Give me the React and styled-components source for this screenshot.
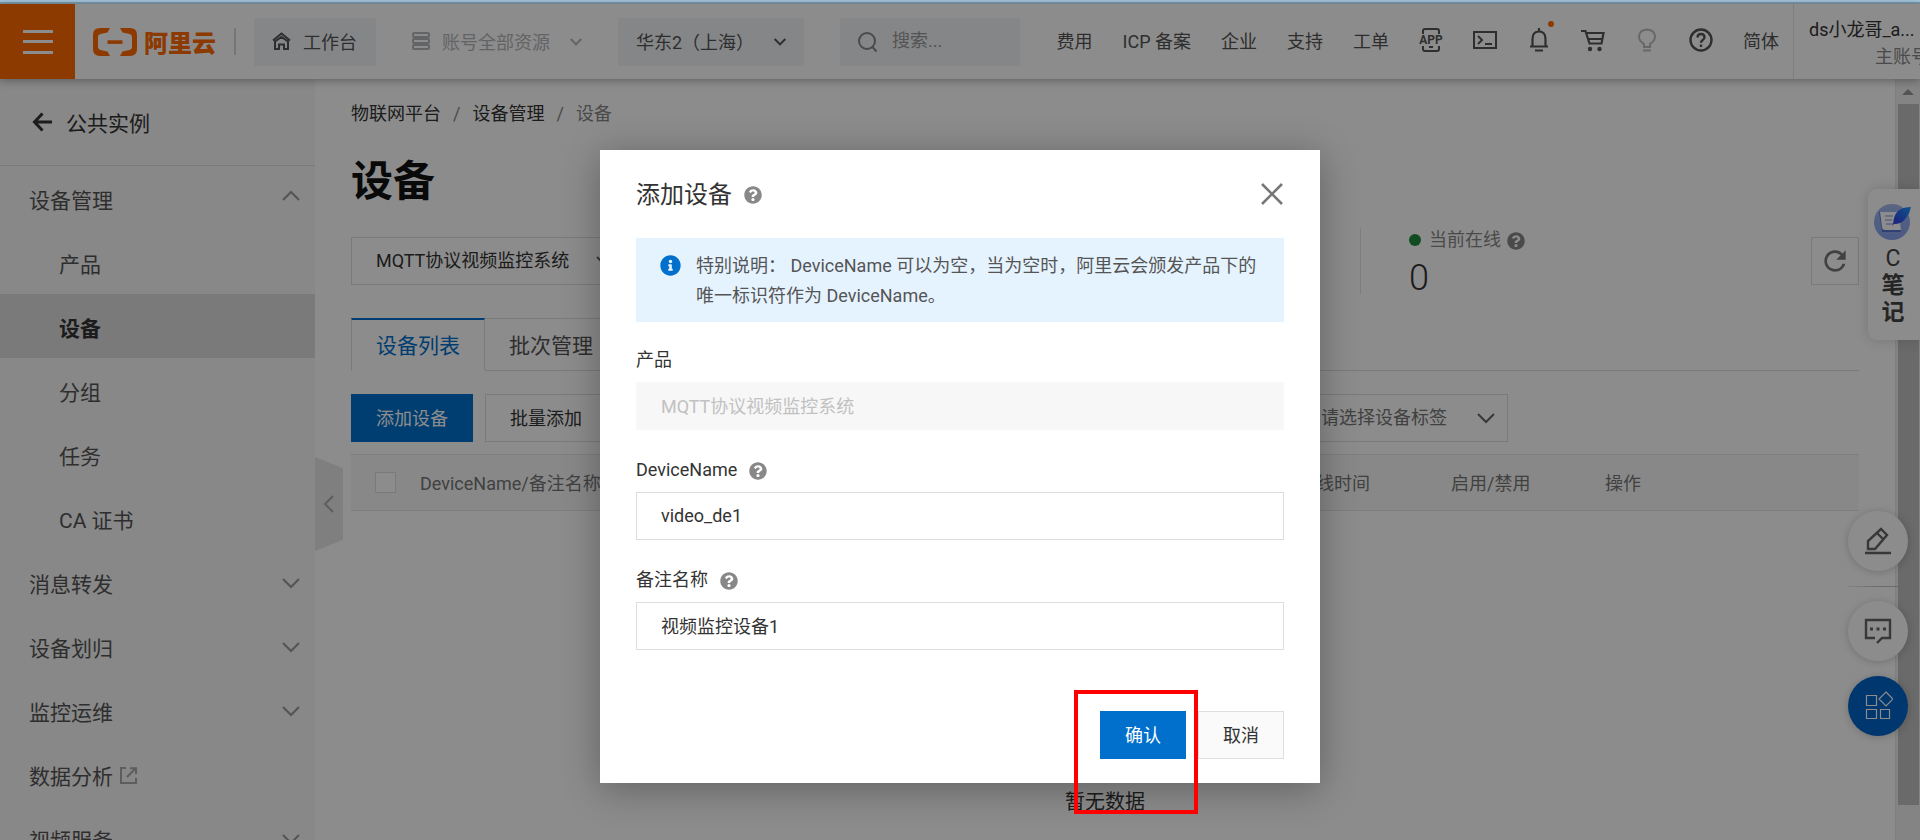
import React, { useState } from "react";
import styled, { createGlobalStyle, css } from "styled-components";
import { FaInfoCircle, FaQuestionCircle } from "react-icons/fa";
import { MdRefresh } from "react-icons/md";

const GlobalStyle = createGlobalStyle`
  * {
    box-sizing: border-box;
  }
  body {
    margin: 0;
    font-family: Roboto, "Noto Sans CJK SC", sans-serif;
    font-size: 18px;
    color: #333;
    overflow: hidden;
  }
  button, input, select {
    font: inherit;
    color: inherit;
  }
  a {
    color: inherit;
    text-decoration: none;
  }
  svg {
    flex: none;
    display: block;
  }
`;

const Page = styled.div`
  position: relative;
  display: flex;
  flex-direction: column;
  height: 100vh;
  overflow: hidden;
  background: #fff;
`;

const TopStrip = styled.div`
  flex: none;
  height: 4px;
  background: #9fc0d6;
  border-bottom: 2px solid #7893a3;
`;

/* ---------- header ---------- */

const Header = styled.header`
  position: relative;
  z-index: 1;
  flex: none;
  display: flex;
  align-items: center;
  height: 75px;
  background: #fff;
  box-shadow: 0 2px 8px rgba(0, 0, 0, 0.3);
  white-space: nowrap;
`;

const MenuButton = styled.button`
  flex: none;
  display: flex;
  align-items: center;
  justify-content: center;
  width: 75px;
  height: 75px;
  padding: 0;
  border: 0;
  background: #ff6a00;
  color: #fff;
`;

const Logo = styled.a`
  display: flex;
  align-items: center;
  gap: 6px;
  height: 27px;
  margin-left: 17px;
  padding-right: 18px;
  border-right: 2px solid #d8d8d8;
  color: #ff6a00;
  font-size: 24px;
  font-weight: 900;
`;

const HeaderButton = styled.button`
  display: flex;
  align-items: center;
  justify-content: space-between;
  height: 48px;
  width: ${({ $width }) => $width}px;
  margin-left: 18px;
  padding: 0 18px 2px;
  border: 0;
  border-radius: 2px;
  background: ${({ $plain }) => ($plain ? "transparent" : "#f2f4f8")};
  color: ${({ $plain }) => ($plain ? "#b3b6ba" : "#555")};
`;

const IconLabel = styled.span`
  display: flex;
  align-items: center;
  gap: 12px;
`;

const Search = styled.label`
  display: flex;
  align-items: center;
  gap: 14px;
  width: 180px;
  height: 48px;
  margin-left: 36px;
  padding: 0 18px;
  background: #f2f4f8;
  color: #888;
`;

const SearchInput = styled.input`
  width: 100%;
  min-width: 0;
  padding: 0 0 2px;
  border: 0;
  outline: none;
  background: none;
  &::placeholder {
    color: #999;
    opacity: 1;
  }
`;

const HeaderNav = styled.nav`
  display: flex;
  align-items: center;
  gap: 30px;
  margin-left: auto;
  padding: 0 14px 3px 0;
  color: #555;
`;

const IconButton = styled.button`
  position: relative;
  display: flex;
  padding: 0;
  border: 0;
  background: none;
  color: ${({ $muted }) => ($muted ? "#b9bdc4" : "#555")};
`;

const Dot = styled.span`
  position: absolute;
  top: -7px;
  right: -3px;
  width: 6px;
  height: 6px;
  border-radius: 50%;
  background: #ff6a00;
`;

const User = styled.div`
  flex: none;
  align-self: stretch;
  width: 127px;
  padding: 12px 0 0 15px;
  border-left: 1px solid #e5e5e5;
  overflow: hidden;
`;

const UserLines = styled.div`
  width: 120px;
  line-height: 27px;
  color: #333;
`;

const UserRole = styled.div`
  text-align: right;
  color: #888;
`;

/* ---------- sidebar ---------- */

const Body = styled.div`
  flex: 1;
  min-height: 0;
  display: flex;
`;

const Sidebar = styled.aside`
  flex: none;
  width: 315px;
  background: #f7f7f7;
  color: #555;
  font-size: 21px;
`;

const BackLink = styled.a`
  display: flex;
  align-items: center;
  gap: 14px;
  height: 87px;
  padding-left: 32px;
  border-bottom: 1px solid #dedede;
  color: #333;
`;

const SideItem = styled.a`
  display: flex;
  align-items: center;
  justify-content: space-between;
  height: 64px;
  padding: 0 15px 0 ${({ $child }) => ($child ? 59 : 29)}px;
  ${({ $active }) =>
    $active &&
    css`
      background: #dfdfdf;
      color: #333;
      font-weight: 700;
    `}
  > svg {
    color: #999;
  }
`;

const SideText = styled.span`
  display: flex;
  align-items: center;
  gap: 7px;
  padding-top: 2px;
`;

const Collapse = styled.button`
  position: absolute;
  left: 315px;
  top: 457px;
  display: flex;
  align-items: center;
  justify-content: center;
  width: 28px;
  height: 94px;
  padding: 0;
  border: 0;
  background: #e8e8e8;
  color: #aaa;
  clip-path: polygon(0 0, 100% 12%, 100% 88%, 0 100%);
`;

/* ---------- main ---------- */

const Main = styled.main`
  flex: 1;
  min-width: 0;
  padding: 23px 36px 0;
  overflow: hidden;
`;

const Breadcrumb = styled.nav`
  display: flex;
  gap: 12px;
  line-height: 24px;
  color: #333;
`;

const Muted = styled.span`
  color: #888;
`;

const Title = styled.h1`
  margin: 26px 0 17px;
  font-size: 42px;
  line-height: 60px;
  font-weight: 700;
  color: #111;
`;

const Overview = styled.div`
  display: flex;
  align-items: center;
  height: 64px;
`;

const SelectBox = styled.div`
  position: relative;
  flex: none;
  width: ${({ $width }) => $width}px;
  svg {
    position: absolute;
    right: 13px;
    top: 14px;
    pointer-events: none;
    color: #666;
  }
`;

const Select = styled.select`
  appearance: none;
  display: block;
  width: 100%;
  height: 48px;
  padding: 0 24px 2px;
  border: 1px solid #dedede;
  border-radius: 0;
  background: #fff;
  color: ${({ $muted }) => ($muted ? "#777" : "#333")};
`;

const Stat = styled.div`
  width: 451px;
  height: 66px;
  margin-left: auto;
  padding-left: 48px;
  border-left: 1px solid #e5e5e5;
`;

const StatName = styled.div`
  display: flex;
  align-items: center;
  gap: 6px;
  line-height: 24px;
  color: #888;
`;

const Status = styled.i`
  width: 12px;
  height: 12px;
  margin-right: 2px;
  border-radius: 50%;
  background: #1e8e3e;
`;

const StatValue = styled.div`
  font-size: 36px;
  font-weight: 300;
  line-height: 52px;
`;

const Refresh = styled.button`
  display: flex;
  align-items: center;
  justify-content: center;
  width: 48px;
  height: 48px;
  padding: 0;
  border: 1px solid #dedede;
  background: #fff;
  color: #777;
  font-size: 32px;
`;

const Tabs = styled.div`
  display: flex;
  margin-top: 25px;
  font-size: 21px;
`;

const Tab = styled.button`
  height: 53px;
  padding: 0 24px 2px;
  border: 1px solid #dedede;
  border-left-width: ${({ $active }) => ($active ? 1 : 0)}px;
  background: #fff;
  color: #555;
  ${({ $active }) =>
    $active &&
    css`
      border-top: 2px solid #0070cc;
      border-bottom-color: transparent;
      color: #0070cc;
    `}
`;

const TabRest = styled.div`
  flex: 1;
  border-bottom: 1px solid #dedede;
`;

const Toolbar = styled.div`
  display: flex;
  gap: 12px;
  margin: 23px 0 12px;
`;

const Button = styled.button`
  height: 48px;
  padding: 0 24px 2px;
  border: 1px solid #dedede;
  border-radius: 0;
  background: ${({ $soft }) => ($soft ? "#fafafa" : "#fff")};
  white-space: nowrap;
  ${({ $primary }) =>
    $primary &&
    css`
      border-color: #0070cc;
      background: #0070cc;
      color: #fff;
    `}
`;

const Query = styled.div`
  flex: none;
  width: 665px;
`;

const TextInput = styled.input`
  display: block;
  width: 100%;
  height: 48px;
  padding: 0 24px 2px;
  border: 1px solid #dedede;
  border-radius: 0;
  background: #fff;
  outline: none;
  &:disabled {
    border-color: #f7f7f7;
    background: #f7f7f7;
    color: #c1c1c1;
  }
`;

const Table = styled.table`
  width: 100%;
  table-layout: fixed;
  border-collapse: collapse;
`;

const Th = styled.th`
  height: 56px;
  width: ${({ $width }) => ($width ? `${$width}px` : "auto")};
  padding: 0 0 2px;
  border: 1px solid #e6e6e6;
  border-width: 1px 0;
  background: #f7f7f7;
  color: #777;
  font-weight: 400;
  text-align: left;
`;

const Checkbox = styled.input`
  appearance: none;
  display: block;
  width: 21px;
  height: 21px;
  margin: 2px 0 0 24px;
  border: 1px solid #dedede;
  background: #fff;
`;

const Empty = styled.td`
  height: 580px;
  padding: 0;
  text-align: center;
  font-size: 20px;
`;

const Scrollbar = styled.div`
  flex: none;
  width: 25px;
  padding: 10px 2px 35px;
  border-left: 1px solid #e8e8e8;
  display: flex;
  flex-direction: column;
  align-items: center;
  gap: 9px;
  background: #f1f1f1;
`;

const Thumb = styled.div`
  flex: 1;
  width: 21px;
  background: #c1c1c1;
`;

/* ---------- floating tools ---------- */

const Note = styled.div`
  position: absolute;
  right: 0;
  top: 189px;
  width: 52px;
  height: 151px;
  padding: 13px 2px 0 0;
  border-radius: 9px 0 0 9px;
  background: #fff;
  box-shadow: 0 0 14px rgba(0, 0, 0, 0.16);
  display: flex;
  flex-direction: column;
  align-items: center;
  font-size: 23px;
  line-height: 27px;
  font-weight: 700;
  color: #444;
`;

const Letter = styled.span`
  padding-top: 5px;
  font-weight: 400;
`;

const Tools = styled.div`
  position: absolute;
  right: 12px;
  top: 511px;
  display: flex;
  flex-direction: column;
  gap: 15px;
`;

const Tool = styled.button`
  display: flex;
  align-items: center;
  justify-content: center;
  width: 60px;
  height: 60px;
  padding: 0;
  border: 0;
  border-radius: 50%;
  background: ${({ $primary }) => ($primary ? "#0064c8" : "#fff")};
  color: ${({ $primary }) => ($primary ? "#fff" : "#666")};
  box-shadow: 0 1px 8px rgba(0, 0, 0, 0.2);
`;

const ToolLine = styled.div`
  height: 1px;
  margin-bottom: -1px;
  background: linear-gradient(90deg, #eee, #c4c4c4, #c1c1c1);
`;

/* ---------- dialog ---------- */

const Overlay = styled.div`
  position: absolute;
  inset: 4px 0 0;
  z-index: 2;
  display: flex;
  justify-content: center;
  align-items: flex-start;
  padding-top: 146px;
  background: rgba(0, 0, 0, 0.45);
`;

const Dialog = styled.section`
  width: 720px;
  padding: 0 36px 24px;
  background: #fff;
  box-shadow: 0 6px 36px rgba(0, 0, 0, 0.3);
`;

const DialogHead = styled.div`
  display: flex;
  align-items: center;
  gap: 12px;
  height: 88px;
`;

const DialogTitle = styled.h2`
  margin: 0;
  padding-bottom: 4px;
  font-size: 24px;
  font-weight: 400;
`;

const Close = styled.button`
  display: flex;
  margin-left: auto;
  padding: 0;
  border: 0;
  background: none;
  color: #777;
`;

const Help = styled(FaQuestionCircle)`
  margin-top: 2px;
  font-size: 18px;
  color: #888;
`;

const Notice = styled.div`
  display: flex;
  gap: 15px;
  padding: 13px 24px 11px;
  background: #e5f3ff;
  color: #555;
  line-height: 30px;
  svg {
    margin-top: 4px;
    font-size: 21px;
    color: #0070cc;
  }
`;

const Field = styled.div`
  margin-top: 22px;
  ${Notice} + & {
    margin-top: 20px;
  }
`;

const FieldLabel = styled.label`
  display: flex;
  align-items: center;
  gap: 12px;
  margin-bottom: 4px;
  line-height: 36px;
`;

const DialogFoot = styled.div`
  display: flex;
  justify-content: flex-end;
  gap: 12px;
  margin-top: 61px;
`;

const Highlight = styled.div`
  position: relative;
  &::after {
    content: "";
    position: absolute;
    inset: -21px -12px -55px -26px;
    border: 4px solid #f00;
    pointer-events: none;
  }
`;

const Chevron = ({ dir = "down", size = 18, width = 2 }) => {
  const d = {
    down: "M1 6l8 8 8-8",
    up: "M1 11l8-8 8 8",
    left: "M13 1l-8 8 8 8",
  }[dir];
  return (
    <svg width={size} height={size} viewBox="0 0 18 18" fill="none" stroke="currentColor" strokeWidth={width}>
      <path d={d} />
    </svg>
  );
};

const Icon = ({ size = 24, children, ...rest }) => (
  <svg width={size} height={size} viewBox="0 0 24 24" fill="none" stroke="currentColor" strokeWidth="2" {...rest}>
    {children}
  </svg>
);

const sideItems = [
  { name: "设备管理", arrow: "up" },
  { name: "产品", child: true },
  { name: "设备", child: true, active: true },
  { name: "分组", child: true },
  { name: "任务", child: true },
  { name: "CA 证书", child: true },
  { name: "消息转发", arrow: "down" },
  { name: "设备划归", arrow: "down" },
  { name: "监控运维", arrow: "down" },
  { name: "数据分析", external: true },
  { name: "视频服务", arrow: "down" },
];

const navLinks = ["费用", "ICP 备案", "企业", "支持", "工单"];

const columns = [
  { name: "DeviceName/备注名称", width: 842 },
  { name: "最后上线时间", width: 189 },
  { name: "启用/禁用", width: 154 },
  { name: "操作" },
];

const HeaderBar = () => (
  <Header>
    <MenuButton aria-label="菜单">
      <svg width="30" height="24" fill="none" stroke="currentColor" strokeWidth="3">
        <path d="M0 1.500h30M0 11.500h30M0 22.500h30" />
      </svg>
    </MenuButton>
    <Logo href="#">
      <svg width="46" height="28" viewBox="0 0 46 28" fill="currentColor">
        <path d="M18 0H8Q1 0 1 7v14q0 7 7 7h10l-2.500-4.500L8.500 22Q6 21.500 6 19V9q0-2.500 2.500-3L15.500 4.500z" />
        <path d="M28 0h10q7 0 7 7v14q0 7-7 7H28l2.500-4.500 7-1.500q2.500-.5 2.500-3V9q0-2.500-2.500-3l-7-1.500z" />
        <path d="M15.500 12.300h15v3.600h-15z" />
      </svg>
      阿里云
    </Logo>
    <HeaderButton $width={122}>
      <IconLabel>
        <svg width="19" height="18" viewBox="0 0 19 18" fill="none" stroke="currentColor" strokeWidth="2">
          <path d="M1 8.500l8.500-7 8.500 7M3 9.500V17h4v-4.500h5V17h4V9.500L9.500 5z" />
        </svg>
        工作台
      </IconLabel>
    </HeaderButton>
    <HeaderButton $plain $width={206}>
      <IconLabel>
        <svg width="18" height="18" viewBox="0 0 18 18" fill="none" stroke="currentColor" strokeWidth="2">
          <rect x="1" y="1" width="16" height="4" rx="1" />
          <rect x="1" y="7" width="16" height="4" rx="1" />
          <rect x="1" y="13" width="16" height="4" rx="1" />
        </svg>
        账号全部资源
      </IconLabel>
      <Chevron size={12} width={3} />
    </HeaderButton>
    <HeaderButton $width={186}>
      华东2（上海）
      <Chevron size={12} width={3} />
    </HeaderButton>
    <Search>
      <svg width="20" height="20" viewBox="0 0 20 20" fill="none" stroke="currentColor" strokeWidth="2">
        <circle cx="9" cy="9" r="8" />
        <path d="M14.500 15l4 4.500" />
      </svg>
      <SearchInput aria-label="搜索" placeholder="搜索..." />
    </Search>
    <HeaderNav>
      {navLinks.map((name) => (
        <a key={name} href="#">
          {name}
        </a>
      ))}
      <IconButton aria-label="APP">
        <Icon>
          <path d="M4 6V3q0-2 2-2h12q2 0 2 2v3M4 18v3q0 2 2 2h12q2 0 2-2v-3M10 19h4" />
          <text
            x="12"
            y="16"
            textAnchor="middle"
            fontSize="12"
            fontWeight="700"
            fill="currentColor"
            stroke="none"
          >
            APP
          </text>
        </Icon>
      </IconButton>
      <IconButton aria-label="云命令行">
        <Icon>
          <path d="M1 4h22v16H1zM5 8l4 4-4 4M12 16h7" />
        </Icon>
      </IconButton>
      <IconButton aria-label="消息">
        <Icon strokeWidth="2.200">
          <path d="M12 0v3M3 18.500h18M5.500 18v-7q0-7.500 6.500-7.500t6.500 7.500v7M8 22.500h8" />
        </Icon>
        <Dot />
      </IconButton>
      <IconButton aria-label="购物车">
        <Icon strokeWidth="2.200">
          <path d="M0 3h4.500l4 12.500h12L22.500 5H5M7 11h14" />
          <circle cx="9" cy="21" r="2.200" fill="currentColor" stroke="none" />
          <circle cx="18.500" cy="21" r="2.200" fill="currentColor" stroke="none" />
        </Icon>
      </IconButton>
      <IconButton $muted aria-label="提示">
        <Icon>
          <path d="M9 19v-3q-5-3-5-7.500Q4.500 2 12 1.500 19.500 2 20 8.500q0 4.500-5 7.500v3zM8 22.500h8" />
        </Icon>
      </IconButton>
      <IconButton aria-label="帮助">
        <Icon strokeWidth="2.400">
          <circle cx="12" cy="12" r="10.500" />
          <path d="M8.500 9.500q0-3.500 3.500-3.500t3.500 3.300q0 1.700-2 2.900-1.500 1-1.500 2.600M12 16.500v2.500" />
        </Icon>
      </IconButton>
      <a href="#">简体</a>
    </HeaderNav>
    <User>
      <UserLines>
        ds小龙哥_a...
        <UserRole>主账号</UserRole>
      </UserLines>
    </User>
  </Header>
);

const SideNav = () => (
  <Sidebar>
    <BackLink href="#">
      <svg width="20" height="20" viewBox="0 0 20 20" fill="none" stroke="currentColor" strokeWidth="3">
        <path d="M10.500 1.500L2.500 10l8 8.500M2.500 10H20" />
      </svg>
      公共实例
    </BackLink>
    {sideItems.map((item) => (
      <SideItem key={item.name} href="#" $child={item.child} $active={item.active}>
        <SideText>
          {item.name}
          {item.external && (
            <svg width="17" height="17" viewBox="0 0 17 17" fill="none" stroke="#aaa" strokeWidth="2">
              <path d="M6 1H1v15h15v-5M7 10l8-8M10 1.200h6V7" />
            </svg>
          )}
        </SideText>
        {item.arrow && <Chevron dir={item.arrow} />}
      </SideItem>
    ))}
  </Sidebar>
);

const DeviceList = () => (
  <Main>
    <Breadcrumb>
      <a href="#">物联网平台</a>
      <Muted>/</Muted>
      <a href="#">设备管理</a>
      <Muted>/</Muted>
      <Muted>设备</Muted>
    </Breadcrumb>
    <Title>设备</Title>
    <Overview>
      <SelectBox $width={276}>
        <Select aria-label="产品">
          <option>MQTT协议视频监控系统</option>
        </Select>
        <Chevron />
      </SelectBox>
      <Stat>
        <StatName>
          <Status />
          当前在线
          <Help />
        </StatName>
        <StatValue>0</StatValue>
      </Stat>
      <Refresh aria-label="刷新">
        <MdRefresh />
      </Refresh>
    </Overview>
    <Tabs>
      <Tab $active>设备列表</Tab>
      <Tab>批次管理</Tab>
      <TabRest />
    </Tabs>
    <Toolbar>
      <Button $primary>添加设备</Button>
      <Button>批量添加</Button>
      <Query>
        <TextInput aria-label="DeviceName" />
      </Query>
      <SelectBox $width={212}>
        <Select $muted aria-label="设备标签">
          <option>请选择设备标签</option>
        </Select>
        <Chevron />
      </SelectBox>
    </Toolbar>
    <Table>
      <thead>
        <tr>
          <Th $width={69}>
            <Checkbox type="checkbox" aria-label="全选" />
          </Th>
          {columns.map((col) => (
            <Th key={col.name} $width={col.width}>
              {col.name}
            </Th>
          ))}
        </tr>
      </thead>
      <tbody>
        <tr>
          <Empty colSpan={columns.length + 1}>暂无数据</Empty>
        </tr>
      </tbody>
    </Table>
  </Main>
);

const FloatingTools = () => (
  <>
    <Note>
      <svg width="40" height="38" viewBox="0 0 40 38">
        <defs>
          <linearGradient id="feather" x1="1" y1="0" x2="0" y2="1">
            <stop offset="0" stopColor="#1b9bff" />
            <stop offset="1" stopColor="#3a2fe0" />
          </linearGradient>
          <linearGradient id="disc" x1="0" y1="0" x2="0" y2="1">
            <stop offset="0" stopColor="#a5b9ee" />
            <stop offset="1" stopColor="#86a2ee" />
          </linearGradient>
        </defs>
        <circle cx="19" cy="20" r="18" fill="url(#disc)" />
        <path d="M6 10l3 20h19l-2-20z" fill="#5876d8" />
        <path d="M7 10h19l2 18H12q-3 0-3-3z" fill="#fff" />
        <path d="M12 14h8M12 18h7M13 22h7" stroke="#a9bbf0" strokeWidth="1.500" />
        <path d="M38 5q-14 0-17 11-.5 3-1 6l-1 2 2-2q8 0 12-6 4-5 5-11z" fill="url(#feather)" />
      </svg>
      <Letter>C</Letter>
      <span>笔</span>
      <span>记</span>
    </Note>
    <Tools>
      <Tool aria-label="编辑">
        <svg width="28" height="28" viewBox="0 0 28 28" fill="none" stroke="currentColor" strokeWidth="2.400">
          <path d="M4 22v-8L17 2l6 6L11 22zM13 6l6 6M1 26h26" />
        </svg>
      </Tool>
      <ToolLine />
      <Tool aria-label="反馈">
        <svg width="28" height="28" viewBox="0 0 28 28" fill="none" stroke="currentColor" strokeWidth="2.400">
          <path d="M11 21H2V3h24v18h-8l-5 5" />
          <path d="M6 12h3M12.500 12h3M19 12h3" strokeWidth="3" />
        </svg>
      </Tool>
      <Tool $primary aria-label="应用">
        <svg width="30" height="30" viewBox="0 0 30 30" fill="none" stroke="currentColor" strokeWidth="1.200">
          <path d="M3.500 4.500h10v10h-10zM3.500 18.500h10v9h-10zM17.500 18.500h9v9h-9zM23 1l7 7-7 7-7-7z" />
        </svg>
      </Tool>
    </Tools>
  </>
);

const AddDeviceDialog = () => {
  const [deviceName, setDeviceName] = useState("video_de1");
  const [nickname, setNickname] = useState("视频监控设备1");

  return (
    <Overlay>
      <Dialog role="dialog" aria-labelledby="dialog-title">
        <DialogHead>
          <DialogTitle id="dialog-title">添加设备</DialogTitle>
          <Help />
          <Close aria-label="关闭">
            <Icon strokeWidth="2.600">
              <path d="M2 2l20 20M22 2L2 22" />
            </Icon>
          </Close>
        </DialogHead>
        <Notice>
          <FaInfoCircle />
          <span>
            特别说明： DeviceName 可以为空，当为空时，阿里云会颁发产品下的唯一标识符作为 DeviceName。
          </span>
        </Notice>
        <Field>
          <FieldLabel htmlFor="product">产品</FieldLabel>
          <TextInput id="product" disabled value="MQTT协议视频监控系统" />
        </Field>
        <Field>
          <FieldLabel htmlFor="device-name">
            DeviceName
            <Help />
          </FieldLabel>
          <TextInput id="device-name" value={deviceName} onChange={(e) => setDeviceName(e.target.value)} />
        </Field>
        <Field>
          <FieldLabel htmlFor="nickname">
            备注名称
            <Help />
          </FieldLabel>
          <TextInput id="nickname" value={nickname} onChange={(e) => setNickname(e.target.value)} />
        </Field>
        <DialogFoot>
          <Highlight>
            <Button $primary>确认</Button>
          </Highlight>
          <Button $soft>取消</Button>
        </DialogFoot>
      </Dialog>
    </Overlay>
  );
};

const App = () => (
  <>
    <GlobalStyle />
    <Page>
      <TopStrip />
      <HeaderBar />
      <Body>
        <SideNav />
        <DeviceList />
        <Scrollbar>
          <svg width="12" height="6" fill="#999">
            <path d="M6 0l6 6H0z" />
          </svg>
          <Thumb />
        </Scrollbar>
      </Body>
      <Collapse aria-label="收起">
        <Chevron dir="left" />
      </Collapse>
      <FloatingTools />
      <AddDeviceDialog />
    </Page>
  </>
);

export default App;
